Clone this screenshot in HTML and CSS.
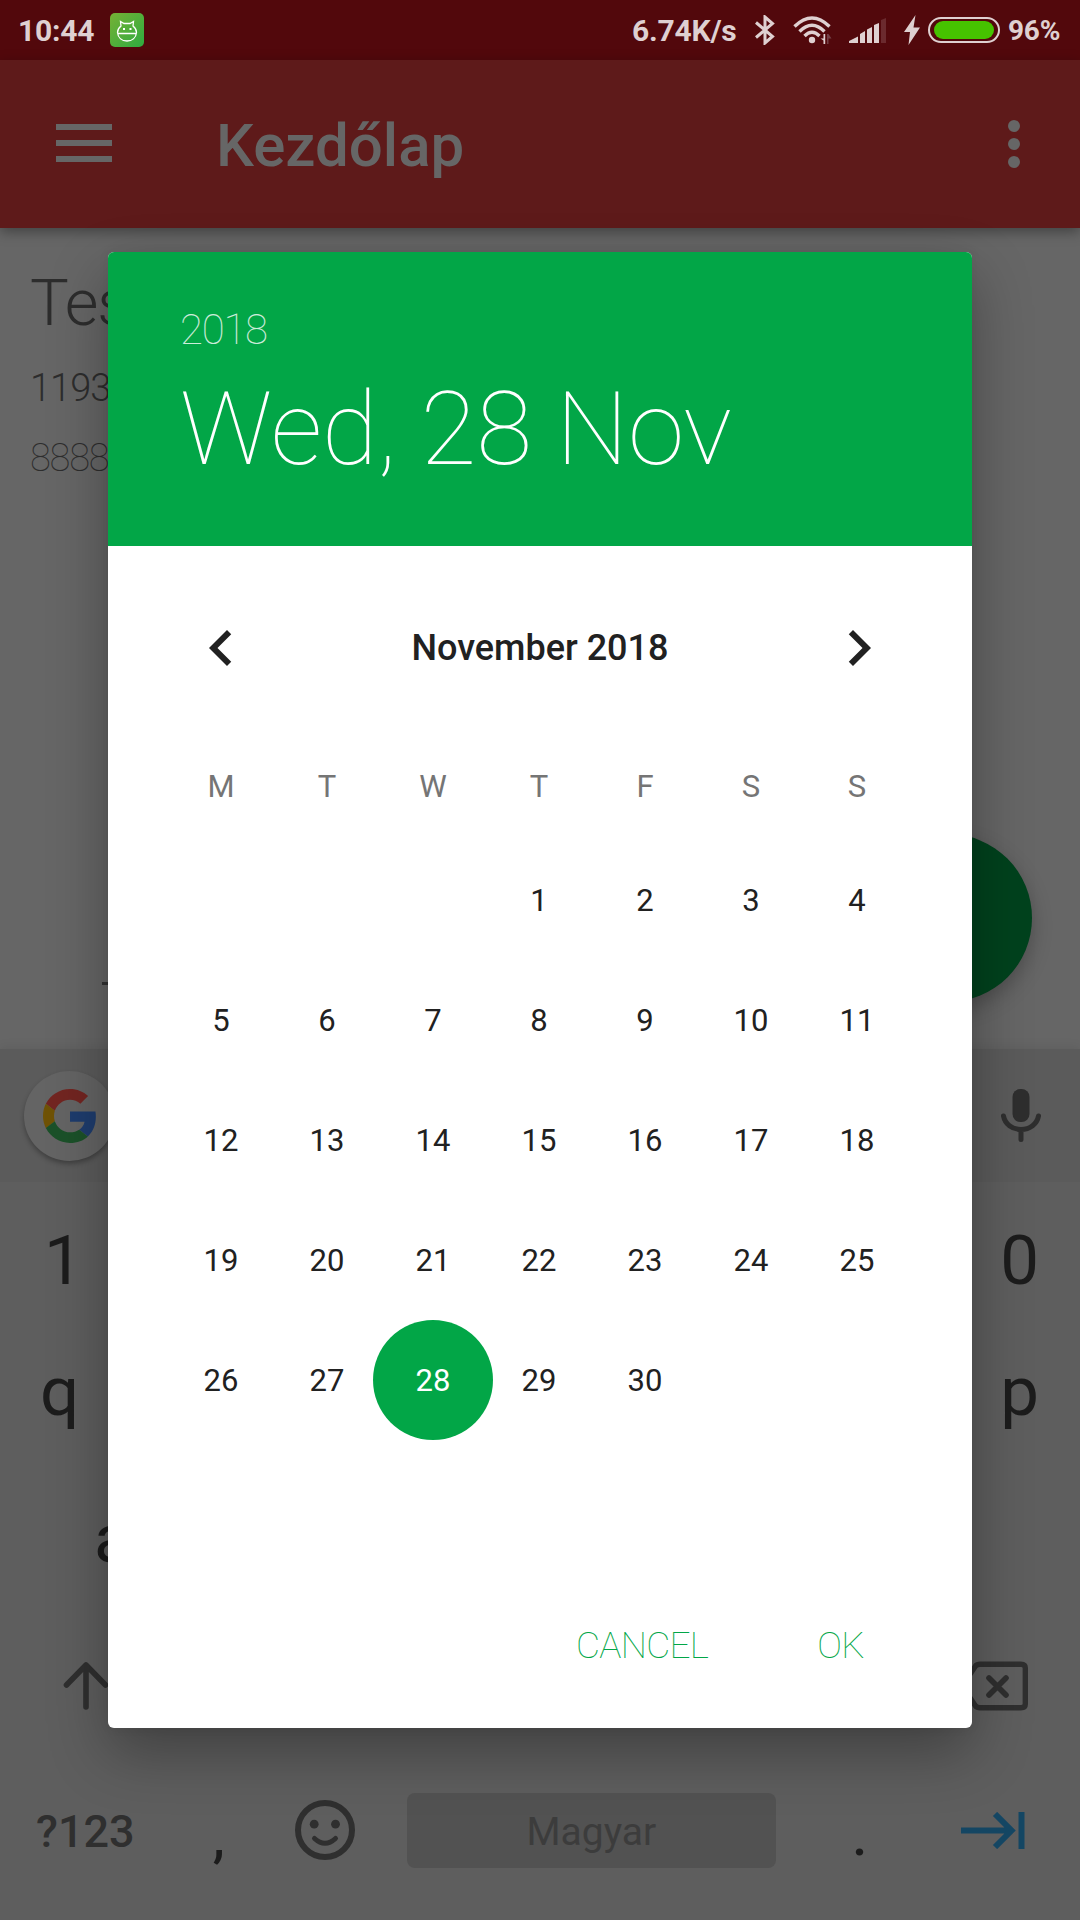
FILE: index.html
```html
<!DOCTYPE html>
<html lang="hu">
<head>
<meta charset="utf-8">
<title>Kezdőlap</title>
<link rel="stylesheet" href="styles.css">
</head>
<body>
<div class="screen">
  <header class="status">
    <span class="clock">10:44</span>
    <svg class="app-badge" viewBox="0 0 34 34">
      <defs><linearGradient id="badge" x1="0" y1="0" x2="1" y2="1"><stop offset="0" stop-color="#76b135"/><stop offset="1" stop-color="#2eab40"/></linearGradient></defs>
      <rect width="34" height="34" rx="5" fill="url(#badge)"/>
      <path d="M11 13 L10.500 8.500 L14 10.500 H20 L23.500 8.500 L23 13 C25.500 15 26.500 17 26.500 19.500 C26 25 22 28 17 28 S8 25 7.500 19.500 C7.500 17 8.500 15 11 13 Z M8 20.500 H26" fill="none" stroke="#fff" stroke-width="1.300"/>
      <path d="M13 15h2v2h-2zM19.500 15h2v2h-2z" fill="#fff"/>
    </svg>
    <span class="spacer"></span>
    <span class="speed">6.74K/s</span>
    <svg class="bluetooth" viewBox="0 0 20 30"><path d="M1 7.500 L17.500 21.500 L10 28 V2 L17.500 8.500 L1 22.500" fill="none" stroke="#dfd0d1" stroke-width="3"/></svg>
    <svg class="wifi" viewBox="0 0 39 28">
      <g fill="none" stroke="#dfd0d1" stroke-width="3.400"><path d="M1.500 10.500 Q19 -6.500 36.500 10.500"/><path d="M6.500 15.500 Q19 3 31.500 15.500"/><path d="M11.500 20 Q19 12.500 26.500 20"/></g>
      <circle cx="19" cy="24" r="3.200" fill="#dfd0d1"/>
      <path d="M30.500 18h1.700v10h-1.700v-3.500l-3-2h3z" fill="#dfd0d1"/><path d="M34 18h1.500l3 4.500h-3V28H34z" fill="#744047"/>
    </svg>
    <svg class="signal" viewBox="0 0 37 25"><path d="M0 25V23L9 18.500V25ZM11 25V16l5-3v12ZM18 25V11.500l5-2.500v16ZM25 25V7l5-2v20Z" fill="#dfd0d1"/><path d="M32 25V2l5-2v25Z" fill="#6b2a2e"/></svg>
    <svg class="bolt" viewBox="0 0 16 30"><path d="M11.500 0 L0 17 H6 L4.500 30 L16 12.500 H9.500 Z" fill="#dfd0d1"/></svg>
    <span class="battery"><span class="charge"></span></span>
    <span class="percent">96%</span>
  </header>
  <nav class="toolbar">
    <span class="menu"><i></i><i></i><i></i></span>
    <h1>Kezdőlap</h1>
    <span class="more"><i></i><i></i><i></i></span>
  </nav>
  <main class="content">
    <h2>Tes</h2>
    <p class="account">1193</p>
    <p class="number">8888</p>
    <div class="input-line"></div>
    <div class="fab"></div>
  </main>
  <section class="suggestions">
    <span class="google">
      <svg viewBox="0 0 48 48"><path fill="#722521" d="M24 9.500c3.540 0 6.710 1.220 9.210 3.600l6.850-6.850C35.900 2.380 30.470 0 24 0 14.620 0 6.510 5.380 2.560 13.220l7.980 6.190C12.430 13.720 17.740 9.500 24 9.500z"/><path fill="#1e3c6d" d="M46.980 24.550c0-1.570-.150-3.090-.380-4.550H24v9.020h12.940c-.580 2.960-2.260 5.480-4.780 7.180l7.730 6c4.510-4.180 7.090-10.360 7.090-17.650z"/><path fill="#6f5205" d="M10.530 28.590c-.480-1.450-.760-2.990-.760-4.590s.270-3.140.760-4.590l-7.980-6.190C.920 16.460 0 20.120 0 24c0 3.880.920 7.540 2.560 10.780l7.970-6.190z"/><path fill="#1b5129" d="M24 48c6.480 0 11.930-2.130 15.890-5.810l-7.730-6c-2.150 1.450-4.920 2.300-8.160 2.300-6.260 0-11.570-4.220-13.470-9.910l-7.980 6.190C6.510 42.620 14.620 48 24 48z"/></svg>
    </span>
    <svg class="mic" viewBox="0 0 40 53"><rect x="11.500" width="17" height="33" rx="8" fill="#2e2e2e"/><path d="M2.500 27C4 35 11 40.500 20 40.500S36 35 37.500 27M20 41v9.500" fill="none" stroke="#2e2e2e" stroke-width="5" stroke-linecap="round"/></svg>
  </section>
  <section class="keyboard">
    <div class="keys top"><span>1</span><span>0</span></div>
    <div class="keys letters"><span>q</span><span>p</span></div>
    <div class="keys home"><span>a</span></div>
    <div class="keys shift-row">
      <svg class="shift" viewBox="0 0 46 50"><path d="M3.500 24 L23 4 L42.500 24 M23 4 V46" fill="none" stroke="#2f2f2f" stroke-width="5.600" stroke-linecap="round" stroke-linejoin="round"/></svg>
      <svg class="backspace" viewBox="0 0 70 50"><path d="M22 3.200 H63 Q67.300 3.200 67.300 7 V43 Q67.300 46.800 63 46.800 H22 Q19 46.800 17.500 45 L4 25 L17.500 5 Q19 3.200 22 3.200Z" fill="none" stroke="#2f2f2f" stroke-width="5.400"/><path d="M31 17 L48 34 M48 17 L31 34" stroke="#2f2f2f" stroke-width="5.600" stroke-linecap="round"/></svg>
    </div>
    <div class="keys bottom">
      <span class="symbols">?123</span>
      <span class="comma">,</span>
      <svg class="emoji" viewBox="0 0 60 60"><circle cx="30" cy="30" r="27" fill="none" stroke="#2f2f2f" stroke-width="6"/><circle cx="19.200" cy="24.200" r="4.400" fill="#2f2f2f"/><circle cx="40.500" cy="24.200" r="4.400" fill="#2f2f2f"/><path d="M19.500 38.500 Q30 48 40.500 38.500" fill="none" stroke="#2f2f2f" stroke-width="5" stroke-linecap="round"/></svg>
      <span class="space">Magyar</span>
      <span class="period">.</span>
      <svg class="next" viewBox="0 0 64 37"><path d="M0 18.500 H50 M34 2 L50.500 18.500 L34 35 M60.500 0 V37" fill="none" stroke="#144663" stroke-width="6"/></svg>
    </div>
  </section>

  <section class="dialog">
    <header class="date">
      <div class="year">2018</div>
      <div class="day">Wed, 28 Nov</div>
    </header>
    <div class="month">
      <svg viewBox="0 0 24 24"><path d="M15.410 7.410L14 6l-6 6 6 6 1.410-1.410L10.830 12z"/></svg>
      <strong>November 2018</strong>
      <svg viewBox="0 0 24 24"><path d="M10 6L8.590 7.410 13.170 12l-4.580 4.590L10 18l6-6z"/></svg>
    </div>
    <div class="week"><span>M</span><span>T</span><span>W</span><span>T</span><span>F</span><span>S</span><span>S</span></div>
    <div class="days">
      <span></span><span></span><span></span><span>1</span><span>2</span><span>3</span><span>4</span>
      <span>5</span><span>6</span><span>7</span><span>8</span><span>9</span><span>10</span><span>11</span>
      <span>12</span><span>13</span><span>14</span><span>15</span><span>16</span><span>17</span><span>18</span>
      <span>19</span><span>20</span><span>21</span><span>22</span><span>23</span><span>24</span><span>25</span>
      <span>26</span><span>27</span><span class="selected">28</span><span>29</span><span>30</span>
    </div>
    <footer class="actions"><span>CANCEL</span><span>OK</span></footer>
  </section>
</div>
</body>
</html>
```
FILE: styles.css
```css
* { box-sizing: border-box; }
body { margin: 0; font-family: Roboto, "Liberation Sans", sans-serif; }
h1, h2, p { margin: 0; }
svg { display: block; flex: none; }

.screen {
  position: relative;
  width: 1080px;
  height: 1920px;
  overflow: hidden;
  display: flex;
  flex-direction: column;
  background: #666;
}

/* status bar */
.status {
  height: 60px;
  flex: none;
  padding: 0 12px 0 18px;
  display: flex;
  align-items: center;
  background: #52080c;
  color: #dfd0d1;
  font-size: 30px;
  font-weight: 700;
  letter-spacing: -.2px;
  white-space: nowrap;
}
.clock { width: 92px; }
.app-badge { width: 34px; height: 34px; }
.spacer { flex: 1; }
.speed { width: 123px; }
.bluetooth { width: 20px; height: 30px; margin-right: 18px; }
.wifi { width: 39px; height: 28px; margin-right: 17px; }
.signal { width: 37px; height: 25px; margin-right: 18px; }
.bolt { width: 16px; height: 30px; margin-right: 8px; }
.battery {
  width: 72px;
  height: 26px;
  padding: 2px 4px;
  border: 2px solid #dfd0d1;
  border-radius: 13px;
}
.charge { display: block; height: 18px; border-radius: 9px; background: #46c300; }
.percent { width: 60px; margin-left: 8px; font-size: 28px; }

/* app bar */
.toolbar {
  position: relative;
  height: 168px;
  flex: none;
  padding: 0 60px 0 56px;
  display: flex;
  align-items: center;
  background: #5e1a1a;
  box-shadow: 0 4px 12px rgba(0, 0, 0, .35);
}
.menu { width: 56px; display: grid; gap: 10px; margin-top: -2px; }
.menu i { height: 6px; background: #666; }
.toolbar h1 { flex: 1; margin: 4px 0 0 104px; color: #666; font-size: 60px; font-weight: 500; line-height: 72px; }
.more { display: grid; gap: 6px; }
.more i { width: 12px; height: 12px; border-radius: 50%; background: #666; }

/* page behind the dialog */
.content { position: relative; height: 821px; flex: none; padding: 37px 30px; color: #2d2d2d; }
.content h2 { font-size: 65px; font-weight: 300; line-height: 76px; letter-spacing: -1px; }
.account { margin-top: 23px; font-size: 38px; font-weight: 300; line-height: 48px; letter-spacing: -1px; }
.number { margin-top: 22px; font-size: 38px; font-weight: 100; line-height: 48px; letter-spacing: -1.200px; }
.input-line { width: 400px; height: 3px; margin: 500px 0 0 72px; background: #333; }
.fab {
  position: absolute;
  left: 864px;
  top: 606px;
  width: 168px;
  height: 168px;
  border-radius: 50%;
  background: #00421d;
  box-shadow: 0 8px 20px rgba(0, 0, 0, .25);
}

/* keyboard */
.suggestions {
  height: 133px;
  flex: none;
  padding: 0 39px 0 24px;
  display: flex;
  align-items: center;
  justify-content: space-between;
  background: #5b5b5b;
  box-shadow: 0 -2px 10px rgba(0, 0, 0, .08);
}
.google {
  width: 91px;
  height: 90px;
  border-radius: 50%;
  display: grid;
  place-items: center;
  background: #646464;
  box-shadow: 0 3px 5px rgba(0, 0, 0, .3);
}
.google svg { width: 54px; height: 54px; }
.mic { width: 40px; height: 53px; }
.keyboard { flex: 1; padding-top: 12px; background: #5e5e5e; color: #1c1c1c; }
.keys { display: flex; align-items: center; justify-content: space-between; font-size: 69px; line-height: 80px; }
.top { height: 132px; padding: 2px 41px 0 44px; }
.letters { height: 132px; padding: 0 41px 0 40px; }
.home { height: 158px; padding: 4px 0 0 94px; }
.shift-row { height: 140px; padding: 0 52px 0 63px; }
.shift { width: 46px; height: 50px; }
.backspace { width: 70px; height: 50px; }
.bottom { height: 148px; padding: 0 55px 0 36px; justify-content: flex-start; }
.symbols { width: 177px; padding-top: 3px; color: #2f2f2f; font-size: 45px; font-weight: 500; }
.comma { width: 82px; font-size: 54px; font-weight: 500; padding-top: 16px; }
.emoji { width: 60px; height: 60px; margin-right: 52px; }
.space {
  width: 370px;
  height: 75px;
  border-radius: 8px;
  background: #525252;
  color: #3c3c3c;
  font-size: 39px;
  line-height: 78px;
  text-align: center;
}
.period { width: 185px; padding: 14px 0 0 76px; font-size: 54px; font-weight: 500; }
.next { width: 64px; height: 37px; }

/* date picker */
.dialog {
  position: absolute;
  left: 108px;
  top: 252px;
  width: 864px;
  height: 1476px;
  border-radius: 6px;
  overflow: hidden;
  background: #fff;
  color: #212121;
  box-shadow: 0 24px 60px rgba(0, 0, 0, .32), 0 0 12px rgba(0, 0, 0, .06);
}
.date { height: 294px; padding: 53px 72px 0; background: #02a647; color: #fff; }
.year { font-size: 42px; font-weight: 100; line-height: 50px; letter-spacing: -1.300px; opacity: .8; }
.day { margin-top: 14px; font-size: 102px; font-weight: 100; line-height: 120px; letter-spacing: -.200px; white-space: nowrap; }
.month { height: 204px; padding: 0 77px; display: flex; align-items: center; justify-content: space-between; }
.month svg { width: 72px; height: 72px; fill: #212121; }
.month strong { font-size: 36px; font-weight: 500; }
.week, .days { margin: 0 62px 0 60px; display: grid; grid-template-columns: repeat(7, 1fr); justify-items: center; align-items: center; font-size: 31px; }
.week { height: 72px; color: #757575; }
.days { margin-top: 18px; grid-auto-rows: 120px; }
.selected { width: 120px; height: 120px; margin: 0 -7px; border-radius: 50%; display: grid; place-items: center; background: #02a647; color: #fff; }
.actions { height: 96px; margin-top: 157px; padding-right: 108px; display: flex; justify-content: flex-end; align-items: center; gap: 109px; color: #02a647; font-size: 37px; font-weight: 100; letter-spacing: -.700px; }
```
